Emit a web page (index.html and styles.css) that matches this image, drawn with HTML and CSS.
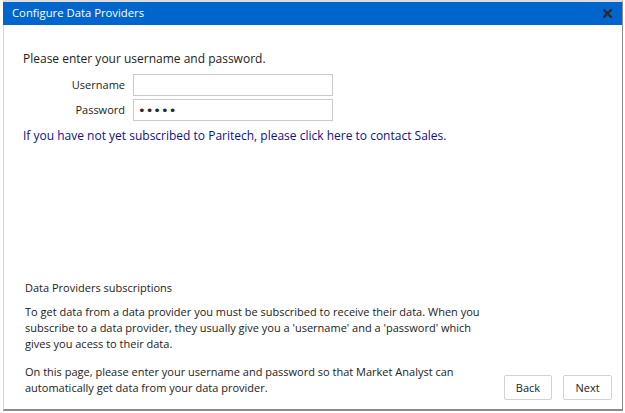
FILE: index.html
```html
<!DOCTYPE html>
<html>
<head>
<meta charset="utf-8">
<link rel="stylesheet" href="styles.css">
</head>
<body>
<div class="window">
  <div class="titlebar">
    <span class="title">Configure Data Providers</span>
    <svg class="close" width="9" height="9" viewBox="0 0 9 9"><path d="M1 1L8 8M8 1L1 8" stroke="#2a2a2a" stroke-width="2.4" stroke-linecap="square"/></svg>
  </div>
  <div class="content">
    <p class="intro">Please enter your username and password.</p>
    <div class="form">
      <label class="label" for="u">Username</label>
      <input class="field" id="u" type="text">
      <label class="label" for="p">Password</label>
      <input class="field field-pass" id="p" type="password" value="12345">
    </div>
    <a class="link" href="#">If you have not yet subscribed to Paritech, please click here to contact Sales.</a>
  </div>
  <div class="footer">
    <div class="help">
      <div class="help-title">Data Providers subscriptions</div>
      <p class="help-text">To get data from a data provider you must be subscribed to receive their data. When you subscribe to a data provider, they usually give you a 'username' and a 'password' which gives you acess to their data.</p>
      <p class="help-text">On this page, please enter your username and password so that Market Analyst can automatically get data from your data provider.</p>
    </div>
    <div class="buttons">
      <button class="btn btn-back">Back</button>
      <button class="btn btn-next">Next</button>
    </div>
  </div>
</div>
</body>
</html>
```
FILE: styles.css
```css
html, body {
  margin: 0;
  padding: 0;
  background: #ffffff;
}
body {
  font-family: "Open Sans", "Noto Sans", sans-serif;
  color: #222;
}
.window {
  margin-left: 3px;
  width: 620px;
  height: 411px;
  box-sizing: border-box;
  border-top: 2px solid #dcdcdc;
  border-left: 1px solid #d4d4d4;
  border-right: 1px solid #8c8c8c;
  border-bottom: 2px solid #8c8c8c;
  display: flex;
  flex-direction: column;
}
.titlebar {
  height: 23px;
  box-sizing: border-box;
  background: #0066cc;
  display: flex;
  justify-content: space-between;
  align-items: flex-start;
  padding: 3px 10px 0 9px;
  margin-left: -1px;
}
.title {
  color: #ffffff;
  font-size: 11.3px;
  line-height: 16px;
}
.close {
  margin-top: 4px;
}
.content {
  flex: 1;
  padding: 25px 0 0 19px;
}
.intro {
  margin: 0;
  font-size: 12px;
  line-height: 18px;
  color: #222;
}
.form {
  margin-top: 6px;
  display: grid;
  grid-template-columns: 102px 200px;
  column-gap: 8px;
  row-gap: 3px;
  align-items: center;
}
.label {
  text-align: right;
  font-size: 11px;
  line-height: 16px;
  color: #222;
}
.field {
  height: 22px;
  width: 200px;
  box-sizing: border-box;
  border: 1px solid #cacaca;
  margin: 0;
  padding: 0 4px;
  font-family: "Open Sans", sans-serif;
  font-size: 12px;
  color: #222;
  outline: none;
}
.field-pass {
  font-family: "DejaVu Sans", sans-serif;
  font-size: 13px;
  color: #2a2a2a;
}
.link {
  display: block;
  margin-top: 6px;
  font-size: 12px;
  line-height: 18px;
  color: #10108a;
  text-decoration: none;
}
.footer {
  display: flex;
  justify-content: space-between;
  align-items: flex-end;
  padding: 0 10px 9px 21px;
}
.help {
  width: 470px;
  margin-bottom: 4px;
  font-size: 11px;
  line-height: 16px;
  color: #222;
}
.help-title {
  margin-bottom: 8px;
}
.help-text {
  margin: 0 0 12px 0;
}
.help-text:last-child {
  margin-bottom: 0;
}
.buttons {
  display: flex;
  gap: 11px;
}
.btn {
  height: 25px;
  box-sizing: border-box;
  border: 1px solid #d2d2d2;
  border-radius: 2px;
  background: #ffffff;
  font-family: "Open Sans", sans-serif;
  font-size: 11px;
  color: #222;
  padding: 0;
}
.btn-back { width: 48px; }
.btn-next { width: 49px; }
```
